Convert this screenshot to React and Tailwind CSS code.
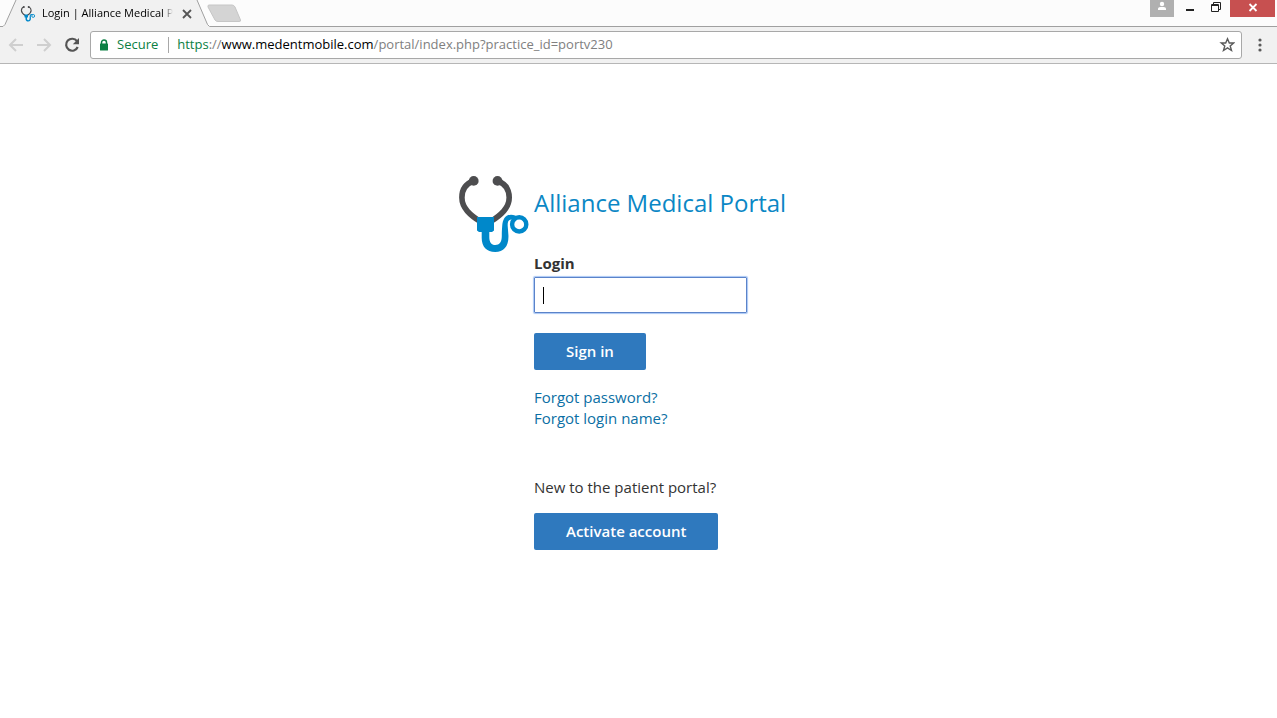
import { useState } from "react";

function StethoscopeLogo({ className }) {
  return (
    <svg viewBox="0 1 72 78" className={className} fill="none" aria-hidden="true">
      <g stroke="#4d4d4f" strokeWidth="5.6" strokeLinecap="round">
        <path d="M15.500 6C7 9 3.900 15 3.900 22.500C3.900 33 12 40 23 47" />
        <path d="M39.700 6C48 9 51.200 15 51.200 22.500C51.200 33 43 40 32 47" />
      </g>
      <circle cx="15.700" cy="5.900" r="4.900" fill="#4d4d4f" />
      <circle cx="39.500" cy="5.900" r="4.900" fill="#4d4d4f" />
      <path d="M19 42H36V55.500L34 57H31.300V62C31.300 67.500 33.500 70 37.300 70C41.500 70 43.800 67 43.800 61C43.800 57 43.900 55 44.200 51C44.700 44 47.500 39.700 53 39.700C56 39.700 58.500 40.800 60 43L57 46C56 44.800 55 44.400 53.500 44.400C50.300 44.400 49.500 47 49.700 51L50.400 60C51 71 46 77 37.200 77C28.500 77 23.700 71.500 23.700 63V57H21L19 55.500Z" fill="#0088ca" />
      <circle cx="61.200" cy="49.400" r="7.100" stroke="#0088ca" strokeWidth="4.400" />
    </svg>
  );
}

function TabStrip() {
  return (
    <div className="flex h-[27px] bg-[#fcfcfc]">
      <svg className="h-[27px] w-5 shrink-0" viewBox="0 0 20 27" aria-hidden="true">
        <path d="M3 27L5 25L16 0H20V27Z" fill="#f1f1f1" />
        <path d="M0 26.500H3L5 24.500L16 0" fill="none" stroke="#a0a0a0" />
      </svg>
      <div className="flex w-44 items-center gap-1.5 bg-[#f1f1f1] pr-px">
        <StethoscopeLogo className="h-4 w-4 shrink-0" />
        <span className="min-w-0 flex-1 overflow-hidden whitespace-nowrap text-[11px] text-black [mask-image:linear-gradient(to_right,black_92%,transparent)]">
          Login | Alliance Medical Portal
        </span>
        <button aria-label="Close tab" className="flex w-4 shrink-0 justify-center">
          <svg className="h-2.5 w-2.5" viewBox="0 0 10 10" aria-hidden="true">
            <path d="M1 1L9 9M9 1L1 9" stroke="#555" strokeWidth="1.8" />
          </svg>
        </button>
      </div>
      <svg className="h-[27px] w-4 shrink-0" viewBox="0 0 16 27" aria-hidden="true">
        <path d="M0 0H1L12 25L14 27H0Z" fill="#f1f1f1" />
        <path d="M1 0L11.500 24.500L13.500 26.500H16" fill="none" stroke="#a0a0a0" />
      </svg>
      <div className="flex flex-1 items-start justify-between border-b border-[#a0a0a0]">
        <button aria-label="New tab" className="-ml-2 mt-1">
          <svg className="h-[19px] w-10" viewBox="0 0 40 19" aria-hidden="true">
            <path d="M5 1H28Q30 1 31 3L36.500 16Q37 17.500 35 17.500H14Q12 17.500 11 16L4 3Q3.500 1 5 1Z" fill="#d4d4d4" stroke="#c6c6c6" />
          </svg>
        </button>
        <div className="flex h-[17px]">
          <button aria-label="Profile" className="flex w-6 justify-center bg-[#b0b0b0]">
            <svg className="h-3 w-3" viewBox="0 0 12 12" fill="#fff" aria-hidden="true">
              <circle cx="6" cy="4" r="2.200" />
              <path d="M2 10V8.500C2 7.300 4 7 6 7S10 7.300 10 8.500V10Z" />
            </svg>
          </button>
          <button aria-label="Minimize" className="flex w-8 justify-center">
            <svg className="h-4 w-4" viewBox="0 0 16 16" aria-hidden="true">
              <path d="M4 9H12V11H4Z" fill="#222" />
            </svg>
          </button>
          <button aria-label="Restore" className="flex w-6 justify-start">
            <svg className="h-4 w-5" viewBox="0 0 20 16" fill="none" stroke="#222" aria-hidden="true">
              <path d="M5.500 4.500H12.500V11.500H5.500ZM5 5.500H13M7.500 4V2.500H14.500V9.500H13" />
            </svg>
          </button>
          <button aria-label="Close window" className="flex w-[45px] justify-center bg-[#c75050]">
            <svg className="h-4 w-4" viewBox="0 0 16 16" aria-hidden="true">
              <path d="M4.500 4L11.500 11M11.500 4L4.500 11" stroke="#fff" strokeWidth="1.8" />
            </svg>
          </button>
          <div className="w-0.5" />
        </div>
      </div>
    </div>
  );
}

function Toolbar() {
  return (
    <div className="flex h-[37px] items-center border-b border-[#b6b6b6] bg-[#f1f1f1] pl-2">
      <div className="flex w-[82px] gap-3">
        <button aria-label="Back">
          <svg className="h-4 w-4" viewBox="0 0 16 16" fill="none" stroke="#cfcfcf" strokeWidth="2" aria-hidden="true">
            <path d="M15 8H2.500M8 2L2 8L8 14" />
          </svg>
        </button>
        <button aria-label="Forward">
          <svg className="h-4 w-4" viewBox="0 0 16 16" fill="none" stroke="#cfcfcf" strokeWidth="2" aria-hidden="true">
            <path d="M1 8H13.500M8 2L14 8L8 14" />
          </svg>
        </button>
        <button aria-label="Reload">
          <svg className="h-4 w-4" viewBox="0 0 16 16" aria-hidden="true">
            <path d="M13 4.200A6 6 0 1 0 13.700 10" fill="none" stroke="#555" strokeWidth="2.2" />
            <path d="M15 1V7.200H8.800Z" fill="#555" />
          </svg>
        </button>
      </div>
      <div className="flex h-7 flex-1 items-center rounded-[3px] border border-[#a8a8a8] bg-white pl-2 text-[13px] text-[#808080]">
        <svg className="mr-2 h-3 w-2.5" viewBox="0 0 10 12" aria-hidden="true">
          <path d="M2.500 5V3.500A2.500 2.500 0 0 1 7.500 3.500V5" fill="none" stroke="#0b8043" strokeWidth="1.5" />
          <rect x="1" y="4.500" width="8" height="7" rx="0.600" fill="#0b8043" />
        </svg>
        <span className="text-[#0b8043]">Secure</span>
        <span className="ml-2.5 mr-2 h-4 w-px bg-[#a8a8a8]" />
        <span className="flex-1">
          <span className="text-[#0b8043]">https</span>://<span className="text-black">www.medentmobile.com</span>/portal/index.php?practice_id=portv230
        </span>
        <button aria-label="Bookmark this page" className="mr-1.5">
          <svg className="h-4 w-4" viewBox="0 0 16 16" fill="none" stroke="#5a5a5a" strokeWidth="1.4" aria-hidden="true">
            <path d="M8.500 1.800L10.300 6H14.700L11.200 8.900L12.500 13.500L8.500 10.900L4.500 13.500L5.800 8.900L2.300 6H6.700Z" />
          </svg>
        </button>
      </div>
      <button aria-label="Menu" className="flex w-[35px] justify-center">
        <svg className="h-4 w-1" viewBox="0 0 4 16" fill="#5a5a5a" aria-hidden="true">
          <circle cx="2" cy="3" r="1.600" />
          <circle cx="2" cy="8" r="1.600" />
          <circle cx="2" cy="13" r="1.600" />
        </svg>
      </button>
    </div>
  );
}

export default function App() {
  const [login, setLogin] = useState("");

  return (
    <div className="min-h-screen bg-white font-['Open_Sans','Noto_Sans',sans-serif]">
      <TabStrip />
      <Toolbar />

      <main className="mx-auto flex max-w-[361px] gap-1 pt-28">
        <StethoscopeLogo className="h-[78px] w-[72px] shrink-0" />

        <form className="flex flex-1 flex-col items-start text-[15px] leading-[21px] text-[#333]" onSubmit={(e) => e.preventDefault()}>
          <h1 className="mt-2 whitespace-nowrap text-2xl leading-[38px] text-[#0b87c5]">Alliance Medical Portal</h1>

          {/* Login field */}
          <label htmlFor="login" className="mt-[31px] font-bold">Login</label>
          <div className="relative mt-[3px] w-[213px]">
            <input id="login" type="text" value={login} onChange={(e) => setLogin(e.target.value)} className="block h-9 w-full rounded-[1px] border border-[#5b83c9] px-2 shadow-[0_0_1px_1px_#a9c7f5] outline-none" />
            {!login && <span className="pointer-events-none absolute left-[9px] top-2.5 h-[17px] w-px bg-black" />}
          </div>
          <button type="submit" className="mt-5 h-[37px] rounded-[2px] bg-[#2f79be] px-8 font-semibold text-white">Sign in</button>

          {/* Account help */}
          <a href="#password" className="mt-[17px] text-[#0b6fa4]">Forgot password?</a>
          <a href="#login-name" className="text-[#0b6fa4]">Forgot login name?</a>

          <p className="mt-12">New to the patient portal?</p>
          <button type="button" className="mt-[15px] h-[37px] rounded-[2px] bg-[#2f79be] px-8 font-semibold text-white">Activate account</button>
        </form>
      </main>
    </div>
  );
}
